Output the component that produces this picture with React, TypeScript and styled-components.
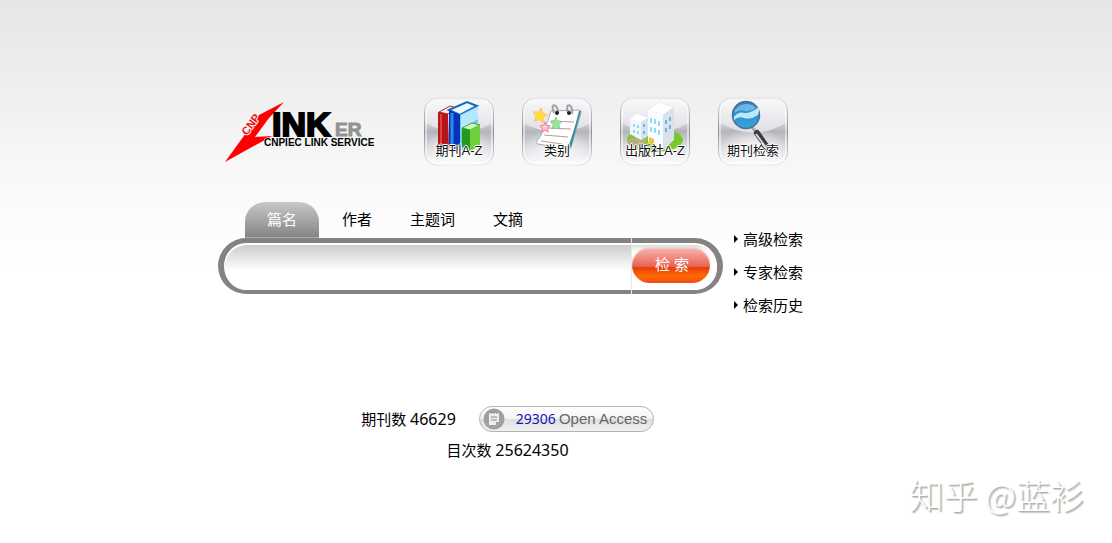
import React, { useState } from "react";
import styled, { createGlobalStyle, css } from "styled-components";

const GlobalStyle = createGlobalStyle`
  * { box-sizing: border-box; }
  body {
    margin: 0;
    min-height: 100vh;
    background: #fff linear-gradient(#e6e6e6 0, #f2f2f2 120px, #fafafa 190px, #fff 270px) no-repeat;
    color: #000;
    font: 15px/20px "Noto Sans", "Noto Sans CJK SC", sans-serif;
  }
`;

const Page = styled.main`
  position: relative;
  display: flex;
  flex-direction: column;
  align-items: center;
  min-height: 100vh;
  padding: 97px 91px 0 0;
`;

const Content = styled.div`
  width: 100%;
  max-width: 585px;
`;

const Header = styled.header`
  display: flex;
  align-items: flex-start;
  gap: 46px;
  padding-left: 6px;
`;

const LogoLink = styled.a`
  display: block;
  line-height: 0;
  padding-top: 3px;
`;

const Shortcuts = styled.nav`
  display: flex;
  gap: 28px;
`;

const Shortcut = styled.a`
  display: grid;
  justify-items: center;
  align-items: end;
  width: 70px;
  height: 69px;
  color: #111;
  text-decoration: none;

  > * { grid-area: 1 / 1; }
`;

const ShortcutLabel = styled.span`
  z-index: 1;
  padding-bottom: 6px;
  font: 13px/18px "Liberation Sans", "Noto Sans CJK SC", sans-serif;
  white-space: nowrap;
  text-shadow: 1px 0 #fff, -1px 0 #fff, 0 1px #fff, 0 -1px #fff, 0 0 2px #fff;
`;

const SearchArea = styled.section`
  display: flex;
  gap: 10px;
  margin-top: 36px;
`;

const SearchForm = styled.form`
  flex: 1;
  min-width: 0;
`;

const Tabs = styled.div`
  display: flex;
  padding-left: 27px;
`;

const Tab = styled.button<{ $active: boolean }>`
  height: 36px;
  padding: 0 19px 2px;
  border: 0;
  background: none;
  color: #000;
  font: inherit;
  cursor: pointer;
  ${({ $active }) =>
    $active &&
    css`
      margin-right: 4px;
      padding: 0 22px 2px;
      border-radius: 20px 20px 0 0;
      background: linear-gradient(#c8c8c8, #858282);
      box-shadow: inset 0 -1px #a8a6a6;
      color: #fff;
    `}
`;

const SearchBar = styled.div`
  display: flex;
  height: 56px;
  border: solid #858282;
  border-width: 5px 6px 4px;
  border-radius: 28px;
  background: #fff;
`;

const SearchInput = styled.input`
  flex: 1;
  min-width: 0;
  margin: 2px 0 0 1px;
  padding: 0 20px;
  border: 0;
  border-radius: 22px 0 0 22px;
  outline: 0;
  background: linear-gradient(#cdcdcd, #fff 26px);
  font: inherit;
`;

const SubmitCell = styled.div`
  position: relative;
  display: flex;
  align-items: flex-start;
  margin-top: 2px;
  padding: 3px 7px 0 1px;
  border-radius: 0 22px 22px 0;
  background: linear-gradient(#dcdcdc, #fff 6px);

  &::before {
    content: "";
    position: absolute;
    inset: -7px auto -4px 0;
    width: 1px;
    background: #e8e8e8;
  }
`;

const SubmitButton = styled.button`
  width: 78px;
  height: 35px;
  padding: 0 0 2px 2px;
  border: 0;
  border-radius: 18px;
  background: linear-gradient(#f5b4ae 0, #f0867c 30%, #e8604e 54%, #e43c0a 55%, #ff6c04 80%, #f04a10 100%);
  box-shadow: inset 0 1px 1px #f8c6c2, 0 -1px 1px #ddd;
  color: #fff;
  font: 15px/20px "Liberation Sans", "Noto Sans CJK SC", sans-serif;
  cursor: pointer;
`;

const SideLinks = styled.nav`
  display: flex;
  flex-direction: column;
  padding-top: 20px;
`;

const SideLink = styled.a`
  display: flex;
  align-items: center;
  gap: 5px;
  height: 33px;
  color: #000;
  text-decoration: none;
  white-space: nowrap;

  &::before {
    content: "";
    margin-left: 1px;
    border: solid transparent;
    border-width: 4px 0 4px 4px;
    border-left-color: #000;
  }
`;

const Stats = styled.section`
  display: flex;
  flex-direction: column;
  align-items: center;
  gap: 8px;
  margin-top: 85px;
  padding-right: 6px;
`;

const StatRow = styled.div`
  display: flex;
  align-items: center;
  gap: 23px;
  white-space: nowrap;
`;

const Figure = styled.span`
  font-size: 16px;
`;

const AccessBadge = styled.a`
  display: flex;
  align-items: center;
  width: 175px;
  height: 26px;
  padding-left: 3px;
  border: 1px solid #b4b4b4;
  border-radius: 13px;
  background: linear-gradient(#fff, #f4f4f4 48%, #dedede 52%, #f2f2f2);
  color: #666;
  font: 15px/20px "Liberation Sans", sans-serif;
  text-decoration: none;
`;

const AccessCount = styled.span`
  margin: 0 3px 0 11px;
  color: #1414b4;
  font: 14px/20px "Noto Sans", sans-serif;
`;

const Watermark = styled.div`
  position: absolute;
  right: 28px;
  bottom: 24px;
  color: #fff;
  font: 300 34px/48px "Noto Sans CJK SC", sans-serif;
  text-shadow: 1px 1px 1px #aaa, 2px 2px 1px #ccc;
`;

const Logo = () => (
  <svg width="154" height="64" viewBox="0 0 154 64" role="img" aria-label="CNPIEC LINKER">
    <path d="M60 2 L35 15 L22 33 L1 62 L48 36 L31 37 L45 18 Z" fill="#f00" />
    <text transform="translate(23 36) rotate(-54)" fill="#e8141c" stroke="#f7f7f7" strokeWidth="2" paintOrder="stroke" fontFamily="Liberation Sans, sans-serif" fontWeight="700" fontSize="11">CNP</text>
    <g fontFamily="Liberation Sans, sans-serif" fontWeight="700">
      <text x="48" y="36" fontSize="34" stroke="#000" strokeWidth="2">INK</text>
      <text x="111" y="36" fontSize="19" fill="#929292" stroke="#929292">ER</text>
      <text x="40" y="46" fontSize="10" stroke="#f4f4f4" strokeWidth="1" paintOrder="stroke">CNPIEC LINK SERVICE</text>
    </g>
  </svg>
);

const TileBase = () => (
  <>
    <defs>
      <linearGradient id="tile" x1="0" y1="0" x2="0" y2="1">
        <stop offset="0" stopColor="#e6e6ea" />
        <stop offset=".38" stopColor="#d2d2d8" />
        <stop offset=".5" stopColor="#b4b4bc" />
        <stop offset=".75" stopColor="#dedee3" />
        <stop offset="1" stopColor="#fdfdfd" />
      </linearGradient>
      <linearGradient id="gloss" x1="0" y1="0" x2="0" y2="1">
        <stop offset="0" stopColor="#f8f8fa" />
        <stop offset="1" stopColor="#dedee4" />
      </linearGradient>
      <radialGradient id="glow">
        <stop offset="0" stopColor="#fff" stopOpacity=".9" />
        <stop offset="1" stopColor="#fff" stopOpacity="0" />
      </radialGradient>
      <linearGradient id="rim" x1="0" y1="0" x2="0" y2="1">
        <stop offset="0" stopColor="#e2e2e5" />
        <stop offset=".5" stopColor="#8e8e96" />
        <stop offset="1" stopColor="#e4e4e7" />
      </linearGradient>
    </defs>
    <rect x=".5" y="1" width="69" height="67" rx="13" fill="url(#tile)" stroke="url(#rim)" />
    <path d="M2 14 Q2 3 14 3 H56 Q68 3 68 14 V26 Q36 45 2 26 Z" fill="url(#gloss)" />
    <ellipse cx="35" cy="52" rx="33" ry="22" fill="url(#glow)" />
    <rect x="2" y="2.5" width="66" height="64" rx="12" fill="none" stroke="#fff" strokeOpacity=".5" strokeWidth="2" />
  </>
);

const Books = () => (
  <>
    <path d="M15 15 L26 9 L33 11 L24 17 Z" fill="#f7f2ee" stroke="#b82a20" />
    <path d="M14 15 L24 17 L25 54 L14 49 Z" fill="#b81418" />
    <path d="M17 17 V49" stroke="#d8453c" strokeWidth="2" />
    <path d="M25 13 L43 5 L53 9 L36 18 Z" fill="#eef8ff" stroke="#1769bd" strokeWidth="2" />
    <path d="M25 13 L36 18 V54 L25 50 Z" fill="#0832b8" />
    <path d="M28 16 V50" stroke="#258cf0" strokeWidth="3" />
    <path d="M36 18 L54 9 V46 L36 54 Z" fill="#6fc8f0" />
    <path d="M37 18 L54 10 V22 L37 32 Z" fill="#b4e8fc" />
    <path d="M38 31 L48 26 L56 28 L46 33 Z" fill="#d5f5c6" stroke="#36ad27" />
    <path d="M38 31 L46 33 V54 L38 50 Z" fill="#219b19" />
    <path d="M46 33 L56 28 V49 L46 54 Z" fill="#70cf3c" />
  </>
);

const star = "M0 -8 L2 -3 L8 -2 L4 2 L5 8 L0 5 L-5 8 L-4 2 L-8 -2 L-2 -3 Z";

const Notepad = () => (
  <>
    <path d="M29 14 L57 13 Q60 13 59 16 L49 50 Q48 53 44 52 L16 47 Q13 46 15 44 Q23 34 29 14 Z" fill="#fff" stroke="#9ab0bd" />
    <path d="M59 14 L49 51 L44 53 Q48 49 57 14 Z" fill="#3a8f9c" />
    <path d="M29 24 L52 25 M26 31 L49 32 M22 38 L46 40 M19 44 L40 47" stroke="#bd9a98" fill="none" />
    <path d="M32 16 C27 4 37 7 36 17 M46 16 C42 4 52 7 50 17" fill="none" stroke="#a2a2a2" strokeWidth="2" />
    <circle cx="35" cy="16" r="2" fill="#222" />
    <circle cx="47" cy="16" r="2" fill="#222" />
    <path d={star} transform="translate(18 18) rotate(10) scale(.9)" fill="#ffdc3d" stroke="#f8c85a" />
    <path d={star} transform="translate(34 26) scale(.75)" fill="#9be79a" stroke="#6fcd78" />
    <path d={star} transform="translate(23 30) scale(.6)" fill="#ffd0d8" stroke="#f48aa0" strokeWidth="2" />
  </>
);

const Building = () => (
  <>
    <ellipse cx="35" cy="43" rx="28" ry="12" fill="#78c92c" />
    <path d="M7 43 Q18 37 28 41 L21 52 Q8 51 7 43 Z" fill="#b5b07a" />
    <path d="M10 22 L17 17 L28 21 L21 25 Z" fill="#fff" />
    <path d="M10 22 L21 25 V43 L10 37 Z" fill="#eff6fc" />
    <path d="M21 25 L28 21 V39 L21 43 Z" fill="#d6e4ef" />
    <path d="M28 13 L39 5 L54 10 L43 18 Z" fill="#fff" stroke="#e6edf2" />
    <path d="M28 13 L43 18 V53 L28 45 Z" fill="#fafdff" />
    <path d="M43 18 L54 10 V43 L43 53 Z" fill="#d9e1ed" />
    <path d="M31 21 V26 M35 22 V27 M39 24 V29 M31 30 V35 M35 31 V36 M39 33 V38 M14 27 V30 M18 28 V31 M14 33 V36 M18 34 V37" stroke="#8fdcf4" strokeWidth="2" />
    <path d="M46 23 V27 M50 20 V24 M46 31 V35 M50 28 V32 M24 27 V30 M24 34 V37" stroke="#6fb4dc" strokeWidth="2" />
    <path d="M29 40 L34 42 V49 L29 46 Z" fill="#f4c62b" />
  </>
);

const Magnifier = () => (
  <>
    <defs>
      <linearGradient id="lens" x1="0" y1="0" x2="0" y2="1">
        <stop offset="0" stopColor="#2a7fc0" />
        <stop offset="1" stopColor="#3aa4dc" />
      </linearGradient>
    </defs>
    <path d="M34 30 L40 38" stroke="#aaa" strokeWidth="3" />
    <path d="M39 36 L51 53" stroke="#3a3a3e" strokeWidth="6" strokeLinecap="round" />
    <path d="M38 37 L49 52" stroke="#d8d8dc" strokeWidth="2" />
    <circle cx="28" cy="18" r="13.5" fill="url(#lens)" stroke="#4f6f9a" strokeWidth="1.5" />
    <path d="M16 20 Q20 14 27 16 Q33 16 41 10 Q42 14 40 18 Q33 23 26 21 Q20 19 16 23 Z" fill="#b8e8fa" />
    <path d="M17 13 Q21 7 28 7 Q35 7 38 11 Q33 15 27 14 Q21 12 17 16 Z" fill="#8cc8ee" opacity=".7" />
  </>
);

const shortcuts = [
  { label: "期刊A-Z", Art: Books },
  { label: "类别", Art: Notepad },
  { label: "出版社A-Z", Art: Building },
  { label: "期刊检索", Art: Magnifier },
];
const fields = ["篇名", "作者", "主题词", "文摘"];
const sideLinks = ["高级检索", "专家检索", "检索历史"];

export default function App() {
  const [field, setField] = useState(fields[0]);

  return (
    <>
      <GlobalStyle />
      <Page>
        <Content>
          <Header>
            <LogoLink href="#"><Logo /></LogoLink>
            <Shortcuts>
              {shortcuts.map(({ label, Art }) => (
                <Shortcut href="#" key={label}>
                  <svg width="70" height="69" viewBox="0 0 70 69" aria-hidden="true">
                    <TileBase />
                    <Art />
                  </svg>
                  <ShortcutLabel>{label}</ShortcutLabel>
                </Shortcut>
              ))}
            </Shortcuts>
          </Header>

          <SearchArea>
            <SearchForm onSubmit={(e) => e.preventDefault()}>
              <Tabs>
                {fields.map((name) => (
                  <Tab key={name} type="button" $active={name === field} onClick={() => setField(name)}>
                    {name}
                  </Tab>
                ))}
              </Tabs>
              <SearchBar>
                <SearchInput type="text" aria-label={field} />
                <SubmitCell>
                  <SubmitButton type="submit">检 索</SubmitButton>
                </SubmitCell>
              </SearchBar>
            </SearchForm>
            <SideLinks>
              {sideLinks.map((name) => (
                <SideLink href="#" key={name}>{name}</SideLink>
              ))}
            </SideLinks>
          </SearchArea>

          <Stats>
            <StatRow>
              <span>期刊数 <Figure>46629</Figure></span>
              <AccessBadge href="#">
                <svg width="22" height="22" viewBox="0 0 22 22" aria-hidden="true">
                  <circle cx="11" cy="11" r="10.5" fill="#a0a0a0" />
                  <path d="M6 5 H16 V14 L13 17 H6 Z" fill="#eee" />
                  <path d="M8 4 V6 M11 4 V6 M14 4 V6 M8 9 H14 M8 12 H14" stroke="#8a8a8a" />
                  <path d="M13 17 V14 H16 Z" fill="#999" />
                </svg>
                <AccessCount>29306</AccessCount>
                Open Access
              </AccessBadge>
            </StatRow>
            <StatRow>
              <span>目次数 <Figure>25624350</Figure></span>
            </StatRow>
          </Stats>
        </Content>
        <Watermark>知乎 @蓝衫</Watermark>
      </Page>
    </>
  );
}
